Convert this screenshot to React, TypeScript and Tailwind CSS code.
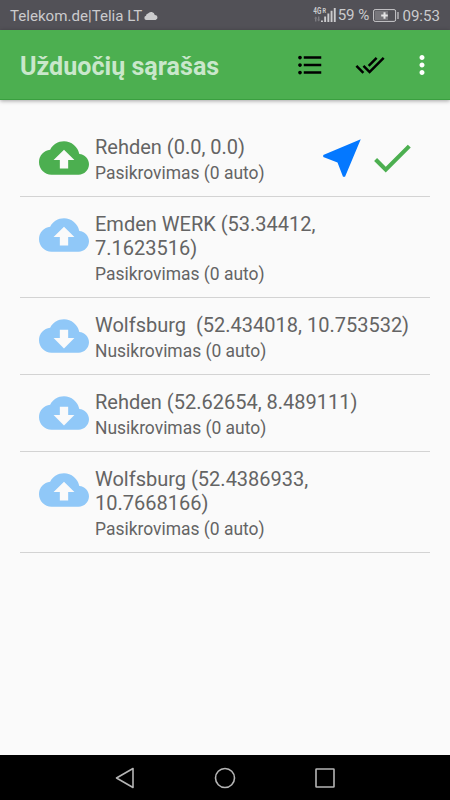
import {
  MdCheck,
  MdCloudDownload,
  MdCloudUpload,
  MdDoneAll,
  MdFormatListBulleted,
  MdMoreVert,
  MdNearMe,
} from "react-icons/md";

type Task = {
  place: string;
  kind: "load" | "unload";
  cars: number;
  active?: boolean;
};

const tasks: Task[] = [
  { place: "Rehden (0.0, 0.0)", kind: "load", cars: 0, active: true },
  { place: "Emden WERK (53.34412, 7.1623516)", kind: "load", cars: 0 },
  { place: "Wolfsburg  (52.434018, 10.753532)", kind: "unload", cars: 0 },
  { place: "Rehden (52.62654, 8.489111)", kind: "unload", cars: 0 },
  { place: "Wolfsburg (52.4386933, 10.7668166)", kind: "load", cars: 0 },
];

export default function App() {
  return (
    <div className="flex h-[800px] w-[450px] flex-col overflow-hidden bg-[#fafafa] font-['Roboto',sans-serif]">
      <StatusBar />
      <AppBar />
      <main className="flex-1 px-5 pt-5">
        {tasks.map((task) => (
          <TaskRow key={task.place} task={task} />
        ))}
      </main>
      <NavBar />
    </div>
  );
}

function StatusBar() {
  return (
    <div className="flex h-[30px] shrink-0 items-center bg-[#525157] px-[10px] text-[15.1px] leading-[28px] text-[#cbcbcd]">
      <span className="pt-[2px] whitespace-nowrap">Telekom.de|Telia LT</span>
      <svg className="ml-[2px] h-[9px] w-[14px]" viewBox="0 0 14 9" fill="currentColor">
        <path d="M2.2 9A2.2 2.2 0 0 1 2 4.7 2.3 2.3 0 0 1 4 2.6 3.8 3.8 0 0 1 10.8 3.9 2.6 2.6 0 0 1 11.6 9z" />
      </svg>
      <div className="ml-auto flex items-center">
        <SignalIcon />
        <span className="ml-[2px] whitespace-nowrap">59 %</span>
        <BatteryIcon />
        <span className="ml-[3.5px] pt-[2px]">09:53</span>
      </div>
    </div>
  );
}

function SignalIcon() {
  return (
    <svg className="h-[16px] w-[23px]" viewBox="0 0 23 16" fill="#cbcbcd">
      <text x="0.3" y="7" fontSize="8.2" fontWeight="700" textLength="8" lengthAdjust="spacingAndGlyphs">
        4G
      </text>
      <text x="9.4" y="5.5" fontSize="6.4" fontWeight="700" textLength="3.6" lengthAdjust="spacingAndGlyphs">
        R
      </text>
      <path d="M2.8 9.5l1.6 2h-1v3h-1.4v-3h-1zM5.6 14.5l-1.6-2h1v-3h1.4v3h1z" opacity=".35" />
      <path d="M8 13.6h1.9v1.4H8zM11.2 9.5h1.9V15h-1.9zM14.4 6.5h1.9V15h-1.9zM17.6 3.7h1.9V15h-1.9zM20.8 1h1.9v14h-1.9z" />
    </svg>
  );
}

function BatteryIcon() {
  return (
    <svg className="ml-[3.5px] h-[13px] w-[26px]" viewBox="0 0 26 13" fill="none">
      <rect x=".6" y=".6" width="22" height="11.8" rx="1.5" stroke="#cbcbcd" />
      <rect x="2" y="2" width="13" height="9" fill="#77767b" />
      <path d="M11.5 3.2v6.6M8.2 6.5h6.6" stroke="#e4e4e5" strokeWidth="2" />
      <path d="M25 3v7" stroke="#cbcbcd" strokeWidth="1.2" />
    </svg>
  );
}

function AppBar() {
  return (
    <header className="z-10 flex h-[70px] shrink-0 items-center border-b border-[#3a9f3f] bg-[#4caf50] pl-5 shadow-[0_1px_4px_rgba(0,0,0,0.35)]">
      <h1 className="pt-1 text-[25.1px] font-bold whitespace-nowrap text-[#c9e7cb]">
        Užduočių sąrašas
      </h1>
      <div className="ml-auto flex items-center pr-[13px] text-black">
        <MdFormatListBulleted size={30} />
        <MdDoneAll size={30} className="ml-[30px]" />
        <MdMoreVert size={30} className="ml-[22.5px] text-white" />
      </div>
    </header>
  );
}

function TaskRow({ task }: { task: Task }) {
  const Cloud = task.kind === "load" ? MdCloudUpload : MdCloudDownload;
  const label = task.kind === "load" ? "Pasikrovimas" : "Nusikrovimas";

  return (
    <div className="flex items-start border-b border-[#d3d3d3] pt-[13px] pb-[11px] pl-[19px]">
      <Cloud size={50} className={task.active ? "shrink-0 text-[#4caf50]" : "shrink-0 text-[#90c8f8]"} />
      <div className="ml-[6px] flex-1 pt-[2px] text-[#646464]">
        <p className="pr-[15px] text-[20px] leading-6 whitespace-pre-wrap">{task.place}</p>
        <p className="mt-[2px] text-[17.45px] leading-6">
          {label} ({task.cars} auto)
        </p>
      </div>
      {task.active && (
        <div className="flex pr-[13px]">
          <MdNearMe size={50} className="text-[#0478ff]" />
          <MdCheck size={50} className="text-[#4caf50]" />
        </div>
      )}
    </div>
  );
}

function NavBar() {
  return (
    <nav className="flex h-[45px] shrink-0 items-center justify-center gap-[78px] bg-black text-[#b5b5b5]">
      <svg className="size-[22px]" viewBox="0 0 22 22" fill="none" stroke="currentColor" strokeWidth="1.6">
        <path d="M19 1.5v19L2.5 11z" strokeLinejoin="round" />
      </svg>
      <svg className="size-[22px]" viewBox="0 0 22 22" fill="none" stroke="currentColor" strokeWidth="1.6">
        <circle cx="11" cy="11" r="9.5" />
      </svg>
      <svg className="size-[22px]" viewBox="0 0 22 22" fill="none" stroke="currentColor" strokeWidth="1.6">
        <rect x="2" y="2" width="18" height="18" rx=".5" />
      </svg>
    </nav>
  );
}
